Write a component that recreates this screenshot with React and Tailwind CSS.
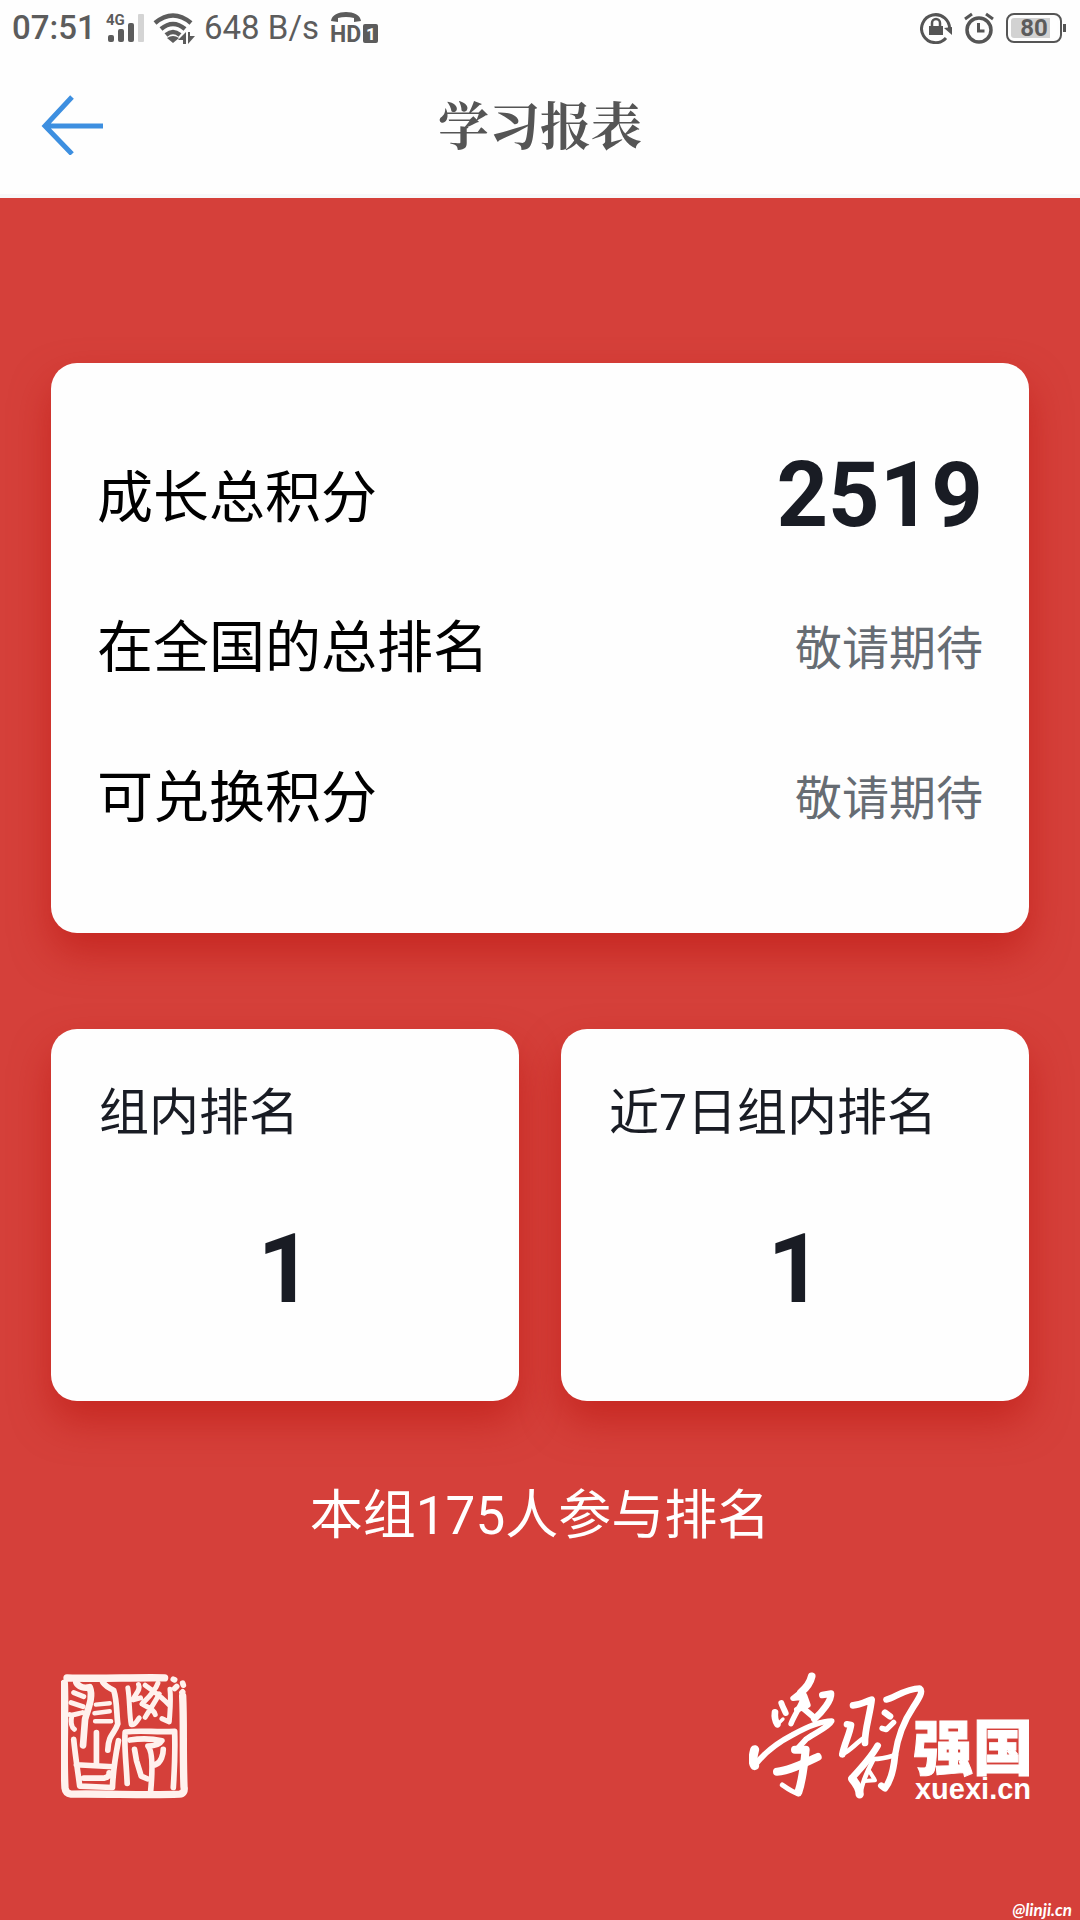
import React from "react";

function StatusIcons() {
  return (
    <div className="flex items-center gap-[11px]">
      <svg className="h-8 w-8" viewBox="0 0 32 32" fill="none" stroke="#555" strokeWidth="3">
        <path d="M26 26 A14 14 0 1 1 29.500 18" />
        <path d="M24 16l8-1v8z" fill="#555" stroke="none" />
        <path d="M12 15v-4a4 4 0 0 1 8 0v4" strokeWidth="2.500" />
        <rect x="9" y="14" width="14" height="9" fill="#555" stroke="none" />
      </svg>
      <svg className="h-8 w-8" viewBox="0 0 32 32" fill="none" stroke="#555">
        <circle cx="16" cy="18" r="12" strokeWidth="3.500" />
        <path d="M2 7l7-5M23 2l7 5" strokeWidth="3" />
        <path d="M15.500 11v8h6" strokeWidth="3" />
      </svg>
      <div className="flex items-center gap-px">
        <div className="flex h-[30px] w-14 items-center justify-center rounded-lg border-2 border-[#555] bg-[linear-gradient(to_right,#d2d2d2_80%,#fff_80%)] bg-clip-content p-[3px] text-[24px] leading-none font-bold">
          80
        </div>
        <div className="h-2 w-[3px] bg-[#555]" />
      </div>
    </div>
  );
}

function StatusBar() {
  return (
    <div className="flex h-14 items-center justify-between pr-[14px] pl-3 font-['Roboto',sans-serif] text-[#5c5c5c]">
      <div className="flex items-center">
        <span className="w-[94px] text-[33px] font-medium">07:51</span>
        <svg className="h-8 w-[38px] overflow-visible" viewBox="0 0 38 32" fill="#5c5c5c">
          <text x="0" y="13" fontSize="15" fontWeight="700">4G</text>
          <rect x="2" y="23" width="6" height="7" rx="2" />
          <rect x="12" y="17" width="6" height="13" rx="2" />
          <rect x="22" y="11" width="6" height="19" rx="2" />
          <rect x="32" y="2" width="6" height="28" rx="1" fill="#d4d4d4" />
        </svg>
        <svg className="ml-2 h-8 w-11" viewBox="0 0 44 32" fill="none" stroke="#5c5c5c" strokeWidth="4.500">
          <path d="M3 11 Q21 -4 39 11" />
          <path d="M9 17 Q21 7 33 17" />
          <path d="M14 23 Q21 17 28 23" />
          <path d="M15 26q6-4 12 0l-6 5z" fill="#5c5c5c" stroke="none" />
          <path d="M34 20v12h-3v-4h-5zM36 32v-12h2v4h5z" fill="#5c5c5c" stroke="none" />
        </svg>
        <span className="ml-2 text-[33px]">648 B/s</span>
        <svg className="ml-3 h-8 w-12 overflow-visible" viewBox="0 0 48 32" fill="#5c5c5c">
          <path d="M0 9C1 -3 29 -3 30 9l-7 1v-4q-8-2-16 0v4z" />
          <text x="-1" y="30" fontSize="23" fontWeight="700">HD</text>
          <rect x="32" y="12" width="15" height="19" rx="2" />
          <text x="35" y="28" fontSize="17" fontWeight="700" fill="#fff">1</text>
        </svg>
      </div>
      <StatusIcons />
    </div>
  );
}

function Header() {
  return (
    <header className="grid h-[142px] grid-cols-[1fr_auto_1fr] items-center border-b-4 border-[#f7f8fa] px-10 pb-1">
      <button type="button" aria-label="返回" className="w-16">
        <svg className="h-16 w-16" viewBox="0 0 64 64" fill="none" stroke="#3d8fe0" strokeWidth="5">
          <path d="M32 6L5 35l27 28M5 35h58" />
        </svg>
      </button>
      <h1 className="font-['Noto_Serif_CJK_SC','Noto_Sans_CJK_SC',serif] text-[51px] leading-none font-bold text-[#555]">
        学习报表
      </h1>
    </header>
  );
}

const rows = [
  { label: "成长总积分", value: "2519", strong: true },
  { label: "在全国的总排名", value: "敬请期待" },
  { label: "可兑换积分", value: "敬请期待" },
];

const ranks = [
  { label: "组内排名", value: "1" },
  { label: "近7日组内排名", value: "1" },
];

function Seal() {
  return (
    <svg className="h-[126px] w-[127px]" viewBox="66 70 380 372" fill="none" stroke="#fff1ed" strokeWidth="17" strokeLinecap="round" strokeLinejoin="round" role="img" aria-label="學習">
      <path d="M84 82C180 86 280 80 376 82M76 98C80 190 72 300 78 412Q80 428 96 430C200 428 320 434 420 430Q438 428 434 408C430 300 434 220 430 136" strokeWidth="22" />
      <path d="M402 86l4 2M430 98l2 6M406 114l6-6M428 126l2-2" strokeWidth="17" />
      <path d="M112 96C118 108 134 114 152 110C164 140 146 176 138 206L132 284" strokeWidth="20" />
      <path d="M104 126L134 138M96 156L132 168M92 192C104 196 118 188 130 186M98 196C94 218 98 230 106 236" strokeWidth="15" />
      <path d="M188 88C194 108 214 112 224 120C234 150 232 190 236 220C226 250 208 250 206 298" />
      <path d="M170 162L212 158M166 188L212 182M168 212L216 212" strokeWidth="13" />
      <path d="M172 246L172 338M104 266C108 310 116 360 122 406L220 410C222 360 230 310 238 270M112 342L222 348M134 382L196 382Q212 378 210 366" />
      <path d="M266 112C272 150 270 190 276 222C288 226 294 208 300 202M298 102C306 120 286 130 282 148L304 142M318 104C340 120 370 140 390 164M356 98C346 126 326 142 308 160C330 172 344 176 348 192M360 130C350 150 330 180 318 200M392 116C396 150 392 180 390 214L368 204" strokeWidth="15" />
      <path d="M264 398C262 340 254 290 258 244C310 238 350 246 406 242C408 300 406 350 402 410" />
      <path d="M272 268C310 262 340 264 368 270C360 284 344 286 326 286C340 300 340 360 334 424M286 296L292 330L306 376L324 384M348 342C366 336 372 310 372 296" />
    </svg>
  );
}

function Wordmark() {
  return (
    <div className="-mr-1 flex items-end text-white">
      <svg className="h-[127px] w-[177px]" viewBox="50 70 531 381" fill="none" stroke="#fff" strokeWidth="18" strokeLinecap="round" strokeLinejoin="round" role="img" aria-label="學習">
        <g transform="translate(30 45)">
          <path d="M208 38C204 56 190 74 176 86" strokeWidth="23" />
          <path d="M182 80L152 104L184 100C178 124 158 150 146 180" strokeWidth="16" />
          <path d="M117 118C120 128 126 138 130 148" strokeWidth="18" />
          <path d="M98 146C96 160 100 174 105 182" strokeWidth="20" />
          <path d="M104 184L122 166" strokeWidth="10" />
          <path d="M186 96L196 124L164 138M178 130L216 162" strokeWidth="18" />
          <path d="M240 94L266 90C268 110 240 145 216 166" strokeWidth="20" />
          <path d="M37 258C32 276 30 296 37 306" strokeWidth="27" />
          <path d="M40 302C60 276 100 240 150 214C200 186 235 172 268 172C260 190 220 206 192 226L166 254" strokeWidth="17" />
          <path d="M158 258L190 258C186 300 180 350 168 386" strokeWidth="24" />
          <path d="M168 390C150 386 134 374 120 364" strokeWidth="15" />
          <path d="M104 324C140 322 184 300 226 280" strokeWidth="24" />
        </g>
        <g transform="translate(300 45)">
          <path d="M62 125C84 124 100 114 118 108C114 150 96 200 98 238" strokeWidth="20" />
          <path d="M44 182L56 184C52 212 36 240 30 272" strokeWidth="20" />
          <path d="M28 272C54 262 72 236 96 222" strokeWidth="14" />
          <path d="M162 108C184 104 220 74 262 74C274 82 260 104 243 130C216 170 196 220 188 275" strokeWidth="19" />
          <path d="M188 275C184 320 176 350 158 374L147 366" strokeWidth="20" />
          <path d="M158 147L173 158" strokeWidth="20" />
          <path d="M149 194L162 198L184 176" strokeWidth="16" />
          <path d="M136 246C120 275 84 316 58 344" strokeWidth="20" />
          <path d="M60 346C72 360 82 376 82 392" strokeWidth="25" />
          <path d="M84 392C88 360 108 316 124 286C150 286 168 280 190 274" strokeWidth="14" />
          <path d="M108 318L126 346M96 352L128 350" strokeWidth="12" />
        </g>
      </svg>
      <div className="-ml-[13px] flex flex-col items-center">
        <span className="mb-[5px] font-['Noto_Sans_CJK_SC',sans-serif] text-[60px] leading-[60px] font-black [-webkit-text-stroke:1px_white]">
          强国
        </span>
        <span className="font-['Liberation_Sans',sans-serif] text-[29px] leading-[20px] font-bold">xuexi.cn</span>
      </div>
    </div>
  );
}

const cardClass = "rounded-[26px] bg-[#fefefe] shadow-[0_20px_38px_rgba(185,20,15,0.55)]";

export default function App() {
  return (
    <div className="relative flex min-h-screen flex-col bg-[#d5403a] font-['Roboto','Noto_Sans_CJK_SC',sans-serif]">
      <div className="bg-[#fefefe]">
        <StatusBar />
        <Header />
      </div>
      <main className="flex flex-1 flex-col px-[51px] pt-[165px]">
        <section className={`${cardClass} px-[46px] py-[60px]`}>
          <dl>
            {rows.map((r) => (
              <div key={r.label} className="flex h-[150px] items-center justify-between">
                <dt className="text-[56px] leading-none text-black">{r.label}</dt>
                {r.strong ? (
                  <dd className="pb-1 text-[90px] leading-none font-bold text-[#191c24]">{r.value}</dd>
                ) : (
                  <dd className="text-[47px] leading-none text-[#666c73]">{r.value}</dd>
                )}
              </div>
            ))}
          </dl>
        </section>
        <div className="mt-24 grid grid-cols-2 gap-[42px]">
          {ranks.map((r) => (
            <section key={r.label} className={`${cardClass} px-12 pt-[58px] pb-[84px]`}>
              <h2 className="text-[50px] leading-[52px] text-[#191c24]">{r.label}</h2>
              <p className="pt-[82px] text-center text-[96px] leading-[96px] font-bold text-[#191c24]">{r.value}</p>
            </section>
          ))}
        </div>
        <p className="mt-[87px] text-center text-[53px] leading-[56px] text-white">本组175人参与排名</p>
        <footer className="mt-32 flex items-end justify-between pl-[10px]">
          <Seal />
          <Wordmark />
        </footer>
      </main>
      <span className="absolute right-2 bottom-0 font-['Lato',sans-serif] text-[17px] leading-[20px] font-bold text-white italic">
        @linji.cn
      </span>
    </div>
  );
}
